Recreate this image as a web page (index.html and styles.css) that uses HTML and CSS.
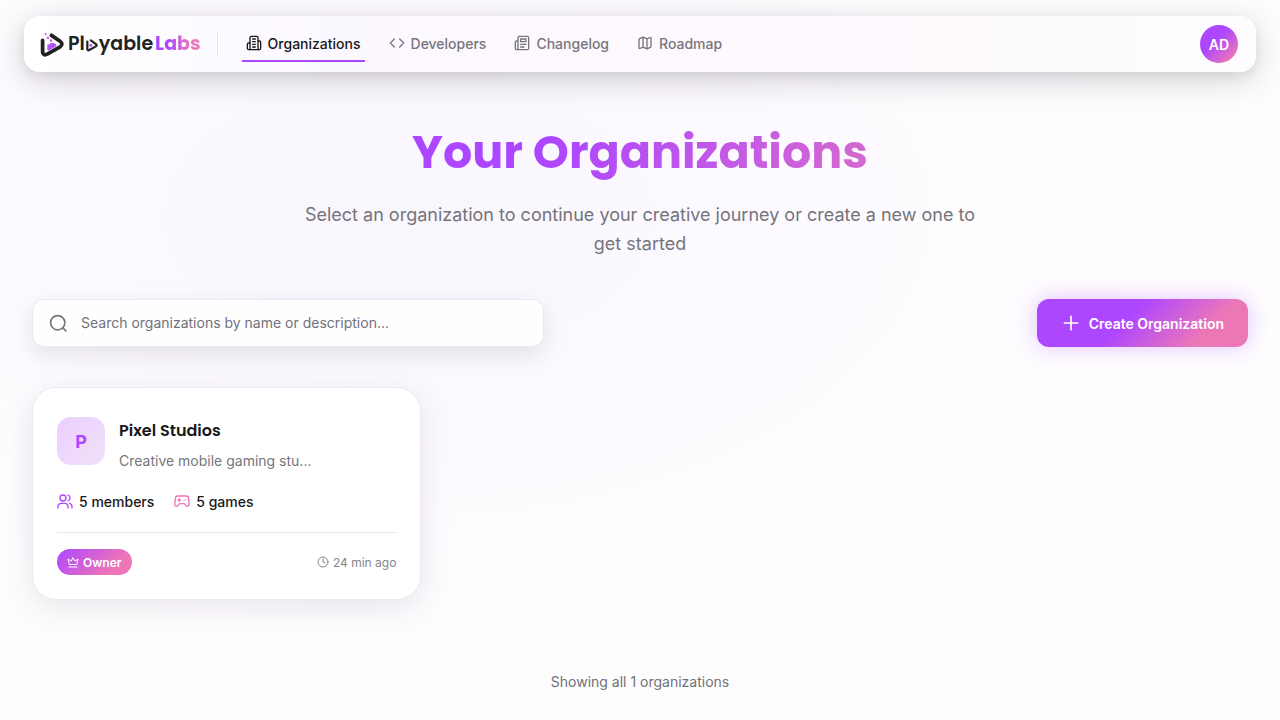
FILE: index.html
```html
<!DOCTYPE html>
<html lang="en">
<head>
<meta charset="UTF-8">
<meta name="viewport" content="width=device-width, initial-scale=1.0">
<title>Organizations - PlayableLabs</title>
<link rel="stylesheet" href="styles.css">
</head>
<body>

<header class="navbar">
    <a class="logo" href="#" aria-label="PlayableLabs">
        <svg class="logo-mark" viewBox="0 0 24 24" fill="none">
            <path d="M2.500 8v11c0 2.600 2.100 3.500 4.400 2.300l12.400-7c2.300-1.400 2.300-4 0-5.400L11 3.200" stroke="#222" stroke-width="3.600" stroke-linecap="round" stroke-linejoin="round"/>
            <path d="M7 12h2.200l.8-1.500h3.500l2 1.500c.7.900.3 1.700-.6 2.200l-5.500 3.100c-1.400.8-2.400.2-2.400-1.200z" fill="#b455f5"/>
            <circle cx="7.500" cy="5.500" r="1.200" fill="#c45be8"/>
            <circle cx="5.500" cy="2" r="1" fill="#c45be8"/>
            <circle cx="10.500" cy="8.200" r="1.200" fill="#c45be8"/>
        </svg>
        <span class="logo-text">Pl<svg class="logo-play" viewBox="0 0 12 12" fill="none"><path d="M2 3v6.500c0 1 .8 1.300 1.700.8l5.600-3.100c.9-.5.9-1.500 0-2L5 2" stroke="#222" stroke-width="1.900" stroke-linecap="round" stroke-linejoin="round"/><circle cx="4.900" cy="6.300" r="1.300" fill="#c04fee"/></svg>yable<span class="logo-labs">Labs</span></span>
    </a>
    <nav class="nav-links">
        <a class="nav-link active" href="#">
            <svg class="icon" viewBox="0 0 24 24"><path d="M6 22V4a2 2 0 0 1 2-2h8a2 2 0 0 1 2 2v18z"/><path d="M6 12H4a2 2 0 0 0-2 2v6a2 2 0 0 0 2 2h2M18 9h2a2 2 0 0 1 2 2v9a2 2 0 0 1-2 2h-2M10 6h4M10 10h4M10 14h4M10 18h4"/></svg>
            Organizations
        </a>
        <a class="nav-link" href="#">
            <svg class="icon" viewBox="0 0 24 24"><path d="m16 18 6-6-6-6M8 6l-6 6 6 6"/></svg>
            Developers
        </a>
        <a class="nav-link" href="#">
            <svg class="icon" viewBox="0 0 24 24"><path d="M4 22h16a2 2 0 0 0 2-2V4a2 2 0 0 0-2-2H8a2 2 0 0 0-2 2v16a2 2 0 0 1-4 0v-9a2 2 0 0 1 2-2h2M18 14h-8M15 18h-5M10 6h8v4h-8z"/></svg>
            Changelog
        </a>
        <a class="nav-link" href="#">
            <svg class="icon" viewBox="0 0 24 24"><path d="M14.106 5.553a2 2 0 0 0 1.788 0l3.659-1.830A1 1 0 0 1 21 4.619v12.764a1 1 0 0 1-.553.894l-4.553 2.277a2 2 0 0 1-1.788 0l-4.212-2.106a2 2 0 0 0-1.788 0l-3.659 1.830A1 1 0 0 1 3 19.381V6.618a1 1 0 0 1 .553-.894l4.553-2.277a2 2 0 0 1 1.788 0zM15 5.764v15M9 3.236v15"/></svg>
            Roadmap
        </a>
    </nav>
    <button class="avatar" type="button">AD</button>
</header>

<main class="page">
    <section class="hero">
        <h1>Your Organizations</h1>
        <p>Select an organization to continue your creative journey or create a new one to get started</p>
    </section>

    <div class="toolbar">
        <label class="search">
            <svg class="icon" viewBox="0 0 24 24"><circle cx="11" cy="11" r="9"/><path d="m21.500 21.500-4-4"/></svg>
            <input type="search" placeholder="Search organizations by name or description..." aria-label="Search organizations">
        </label>
        <button class="create-btn" type="button">
            <svg class="icon" viewBox="0 0 24 24"><path d="M4 12h16M12 4v16"/></svg>
            Create Organization
        </button>
    </div>

    <div class="grid">
        <article class="card">
            <div class="card-head">
                <div class="card-avatar">P</div>
                <div>
                    <h2>Pixel Studios</h2>
                    <p>Creative mobile gaming stu...</p>
                </div>
            </div>
            <div class="stats">
                <span class="stat members">
                    <svg class="icon" viewBox="0 0 24 24"><path d="M1.500 21v-2a5 5 0 0 1 5-5h5a5 5 0 0 1 5 5v2"/><circle cx="9" cy="6" r="4.500"/><path d="M22.500 21v-2a5 5 0 0 0-3.500-4.800M16.500 1.700a4.500 4.500 0 0 1 0 8.600"/></svg>
                    5 members
                </span>
                <span class="stat games">
                    <svg class="icon" viewBox="0 0 24 24"><path d="M6 3h12a4 4 0 0 1 4 4l.8 8.500c0 3.500-3.500 3.500-5 1.500L15.500 14.500h-7L6.200 17c-1.500 2-5 2-5-1.500L2 7a4 4 0 0 1 4-4zM6 9h4M8 7v4M15 10h.01M18 8h.01"/></svg>
                    5 games
                </span>
            </div>
            <div class="card-foot">
                <span class="badge">
                    <svg class="icon" viewBox="0 0 24 24"><path d="m12 4 4 6 6-4-2.500 11h-15L2 6l6 4zM4 22h16"/></svg>
                    Owner
                </span>
                <span class="time">
                    <svg class="icon" viewBox="0 0 24 24"><circle cx="12" cy="12" r="10"/><path d="M12 6v6l4 2"/></svg>
                    24 min ago
                </span>
            </div>
        </article>
    </div>

    <p class="count">Showing all 1 organizations</p>
</main>

</body>
</html>
```
FILE: styles.css
```css
* {
    box-sizing: border-box;
}
body {
    margin: 0;
    min-height: 100vh;
    padding: 16px 24px;
    font-family: Inter, sans-serif;
    font-size: 14px;
    color: #18181b;
    background:
        radial-gradient(ellipse at 32% 30%, #f9f6fe 0%, rgba(252, 249, 255, 0.6) 35%, transparent 60%),
        #fefdfe;
}
h1, h2, p {
    margin: 0;
}
a {
    text-decoration: none;
}
button {
    font-family: inherit;
    border: none;
    cursor: pointer;
}
.icon {
    width: 16px;
    height: 16px;
    flex: none;
    fill: none;
    stroke: currentColor;
    stroke-width: 2;
    stroke-linecap: round;
    stroke-linejoin: round;
}
.navbar {
    display: flex;
    align-items: center;
    height: 56px;
    padding: 0 18px 0 16px;
    border-radius: 16px;
    background: linear-gradient(90deg, #ffffff, #fcf8ff 25%, #fdf9fe 60%, #fefcfe);
    box-shadow: 0 8px 32px rgba(20, 10, 25, 0.18), 0 4px 12px rgba(20, 10, 25, 0.06);
}
.logo {
    display: flex;
    align-items: center;
    gap: 3px;
    padding-right: 16px;
    border-right: 1px solid #e9e4ee;
    color: #222;
}
.logo-mark {
    width: 25px;
    height: 25px;
}
.logo-text {
    font-family: Poppins, Inter, sans-serif;
    font-size: 19px;
    font-weight: 600;
    line-height: 24px;
}
.logo-play {
    width: 14px;
    height: 14px;
    vertical-align: -2px;
}
.logo-labs {
    margin-left: 2px;
    font-weight: 700;
    background: linear-gradient(90deg, #ad46ff 30%, #e879b9 75%);
    background-clip: text;
    color: transparent;
}
.nav-links {
    display: flex;
    flex: 1;
    gap: 20px;
    margin-left: 24px;
}
.nav-link {
    display: flex;
    align-items: center;
    gap: 6px;
    height: 36px;
    padding: 0 4px;
    border-bottom: 2px solid transparent;
    font-weight: 500;
    color: #77767d;
}
.nav-link.active {
    color: #18181b;
    border-bottom-color: #ad46ff;
}
.avatar {
    width: 38px;
    height: 38px;
    padding: 0;
    border-radius: 50%;
    background: linear-gradient(135deg, #ad46ff 40%, #f07ab0 90%);
    color: #fff;
    font-size: 14px;
    font-weight: 600;
}
.page {
    padding: 48px 8px 0;
}
.hero {
    max-width: 768px;
    margin: 0 auto;
    text-align: center;
}
.hero h1 {
    font-family: Poppins, Inter, sans-serif;
    font-size: 46px;
    line-height: 64px;
    font-weight: 700;
    background: linear-gradient(100deg, #ad46ff 38%, #e879b9 100%);
    background-clip: text;
    color: transparent;
}
.hero p {
    max-width: 672px;
    margin: 16px auto 0;
    font-size: 18px;
    line-height: 29px;
    color: #75747b;
}
.toolbar {
    display: flex;
    justify-content: space-between;
    align-items: center;
    margin-top: 41px;
}
.search {
    display: flex;
    align-items: center;
    gap: 13px;
    width: 512px;
    height: 48px;
    padding: 0 16px;
    border: 1px solid #ece8f0;
    border-radius: 12px;
    background: #fffeff;
    box-shadow: 0 8px 24px rgba(20, 10, 25, 0.1);
    color: #71717b;
}
.search .icon {
    width: 19px;
    height: 19px;
}
.search input {
    flex: 1;
    padding: 0 0 2px;
    border: none;
    outline: none;
    background: none;
    font: inherit;
}
.search input::placeholder {
    color: #71717b;
}
.create-btn {
    display: flex;
    align-items: center;
    gap: 8px;
    height: 48px;
    padding: 0 24px;
    border-radius: 12px;
    background: linear-gradient(135deg, #ad46ff 42%, #ec77b7 78%);
    box-shadow: 0 0 22px rgba(173, 70, 255, 0.32);
    color: #fff;
    font-size: 14px;
    font-weight: 600;
}
.create-btn .icon {
    width: 20px;
    height: 20px;
}
.grid {
    display: grid;
    grid-template-columns: repeat(3, 1fr);
    gap: 24px;
    margin-top: 40px;
}
.card {
    padding: 24px;
    border: 1px solid #eee9f1;
    border-radius: 24px;
    background: #fff;
    box-shadow: 0 8px 32px rgba(50, 20, 70, 0.1);
}
.card-head {
    display: flex;
    align-items: flex-start;
    gap: 14px;
    padding-top: 3px;
}
.card-avatar {
    display: flex;
    align-items: center;
    justify-content: center;
    width: 48px;
    height: 48px;
    margin-top: 2px;
    border-radius: 14px;
    background: linear-gradient(135deg, #ebcfff, #f1e0f8);
    color: #ad46ff;
    font-size: 18px;
    font-weight: 700;
}
.card h2 {
    font-family: Poppins, Inter, sans-serif;
    font-size: 16px;
    line-height: 32px;
    font-weight: 600;
}
.card-head p {
    line-height: 28px;
    color: #77767d;
}
.stats {
    display: flex;
    gap: 20px;
    margin-top: 17px;
    padding-bottom: 20px;
    border-bottom: 1px solid #e8e6ea;
    font-weight: 500;
    line-height: 20px;
}
.stat {
    display: flex;
    align-items: center;
    gap: 6px;
}
.members .icon {
    color: #ad46ff;
}
.games .icon {
    color: #ed75b8;
}
.card-foot {
    display: flex;
    justify-content: space-between;
    align-items: center;
    margin-top: 16px;
}
.badge {
    display: flex;
    align-items: center;
    gap: 4px;
    height: 26px;
    padding: 0 10px;
    border-radius: 13px;
    background: linear-gradient(135deg, #ad46ff, #ed75b8 75%);
    color: #fff;
    font-size: 12px;
    font-weight: 600;
}
.badge .icon, .time .icon {
    width: 12px;
    height: 12px;
}
.time {
    display: flex;
    align-items: center;
    gap: 4px;
    font-size: 12px;
    color: #85848c;
}
.count {
    margin-top: 72px;
    text-align: center;
    line-height: 20px;
    color: #71717b;
}
```
